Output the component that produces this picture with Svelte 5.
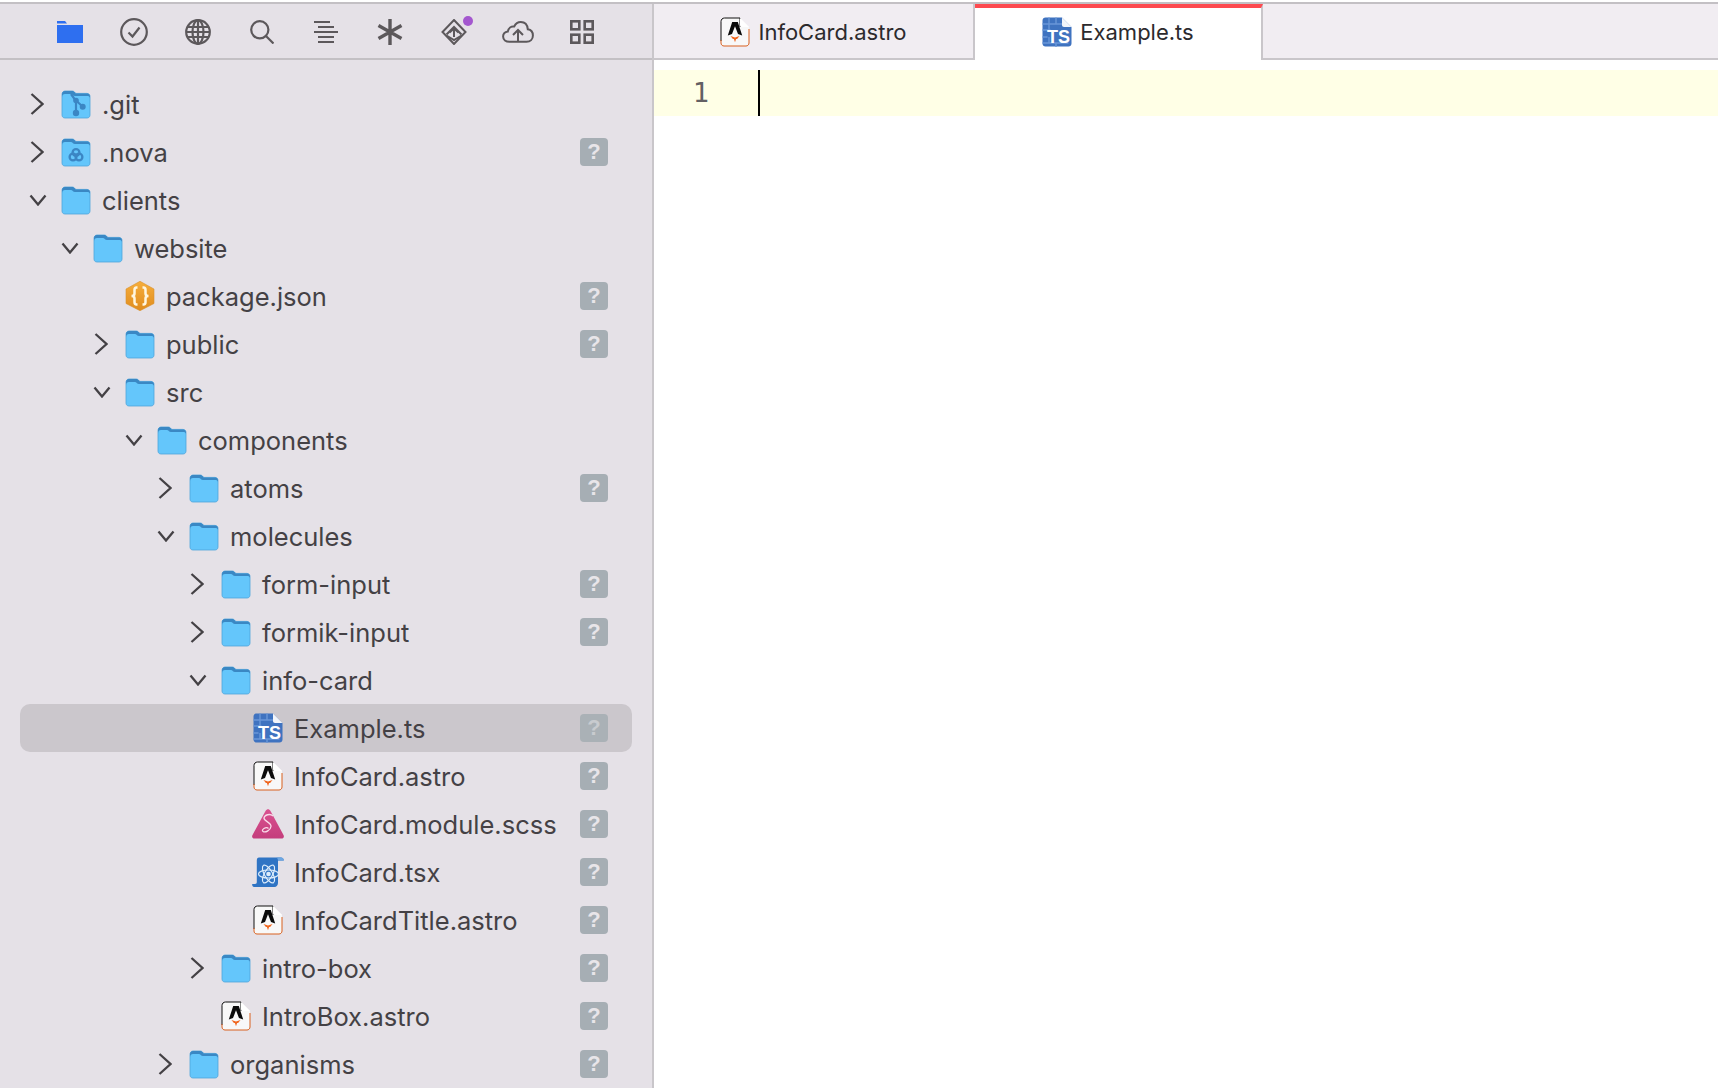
<script>
  const rows = [
    { d: 0, c: '>', i: 'git', t: '.git' },
    { d: 0, c: '>', i: 'nova', t: '.nova', q: 1 },
    { d: 0, c: 'v', i: 'folder', t: 'clients' },
    { d: 1, c: 'v', i: 'folder', t: 'website' },
    { d: 2, i: 'json', t: 'package.json', q: 1 },
    { d: 2, c: '>', i: 'folder', t: 'public', q: 1 },
    { d: 2, c: 'v', i: 'folder', t: 'src' },
    { d: 3, c: 'v', i: 'folder', t: 'components' },
    { d: 4, c: '>', i: 'folder', t: 'atoms', q: 1 },
    { d: 4, c: 'v', i: 'folder', t: 'molecules' },
    { d: 5, c: '>', i: 'folder', t: 'form-input', q: 1 },
    { d: 5, c: '>', i: 'folder', t: 'formik-input', q: 1 },
    { d: 5, c: 'v', i: 'folder', t: 'info-card' },
    { d: 6, i: 'ts', t: 'Example.ts', q: 1, sel: 1 },
    { d: 6, i: 'astro', t: 'InfoCard.astro', q: 1 },
    { d: 6, i: 'scss', t: 'InfoCard.module.scss', q: 1 },
    { d: 6, i: 'tsx', t: 'InfoCard.tsx', q: 1 },
    { d: 6, i: 'astro', t: 'InfoCardTitle.astro', q: 1 },
    { d: 5, c: '>', i: 'folder', t: 'intro-box', q: 1 },
    { d: 5, i: 'astro', t: 'IntroBox.astro', q: 1 },
    { d: 4, c: '>', i: 'folder', t: 'organisms', q: 1 }
  ];
</script>

{#snippet folderBase()}
  <path d="M1 5.500C1 3.500 2.200 2 4 2h7c1.400 0 2.200.6 3 1.600l.6.8H26c1.800 0 3 1.300 3 3V26c0 1.800-1.200 3-3 3H4c-1.800 0-3-1.200-3-3z" fill="#64c6fb" stroke="#4fa5dc" stroke-width=".8"/>
  <path d="M1 5.500C1 3.500 2.200 2 4 2h7c1.400 0 2.200.6 3 1.600l.6.8H26c1.800 0 3 1.300 3 3v1.400c-.4-1.200-1.400-1.800-2.600-1.800H14c-1 0-1.700-.3-2.300-1l-.4-.4c-.3-.3-.7-.5-1.200-.5H4c-1.700 0-3 1.200-3 3z" fill="#3a88c4"/>
{/snippet}

{#snippet icon(kind)}
  {#if kind === 'folder'}
    <svg class="ic" viewBox="0 0 30 30">{@render folderBase()}</svg>
  {:else if kind === 'git'}
    <svg class="ic" viewBox="0 0 30 30">
      {@render folderBase()}
      <path d="M10 5l5 7v12M15 11.500l6.500 6" stroke="#3b86c4" stroke-width="2.200" fill="none"/>
      <circle cx="15" cy="11.500" r="2.800" fill="#3b86c4"/><circle cx="21.700" cy="17.700" r="3" fill="#3b86c4"/><circle cx="15" cy="24" r="3.200" fill="#3b86c4"/>
    </svg>
  {:else if kind === 'nova'}
    <svg class="ic" viewBox="0 0 30 30">
      {@render folderBase()}
      <g fill="none" stroke="#3b86c4" stroke-width="2.300">
        <circle cx="15" cy="15.500" r="3.400"/><circle cx="12" cy="20" r="3.400"/><circle cx="18" cy="20" r="3.400"/>
      </g>
    </svg>
  {:else if kind === 'json'}
    <svg class="ic" viewBox="0 0 30 30">
      <defs><linearGradient id="jg" x1="0" y1="0" x2="0" y2="1"><stop offset="0" stop-color="#f6ae3c"/><stop offset="1" stop-color="#e08c1e"/></linearGradient></defs>
      <path d="M15 .3L29 8v14.500L15 29.700 1 22.500V8z" fill="url(#jg)" stroke="#d8922f" stroke-width=".6" stroke-linejoin="round"/>
      <path d="M12.500 6.500h-1C10 6.500 9.500 7.500 9.500 9v3.500c0 1.500-1 2.500-3 2.500 2 0 3 1 3 2.500V21c0 1.500.5 2.500 2 2.500h1M17.500 6.500h1c1.500 0 2 1 2 2.500v3.500c0 1.500 1 2.500 3 2.500-2 0-3 1-3 2.500V21c0 1.500-.5 2.500-2 2.500h-1" fill="none" stroke="#fff6e0" stroke-width="2.500"/>
    </svg>
  {:else if kind === 'ts'}
    <svg class="ic" viewBox="0 0 30 30">
      <path d="M3 .5h17l9.500 9.500v16.500c0 1.700-1.300 3-3 3h-23c-1.700 0-3-1.300-3-3v-23c0-1.700 1.300-3 3-3z" fill="#3f73c0"/>
      <path d="M.5 7h20M.5 13h8M7 .5V13M14 .5V7M.5 20h5M.5 26h26M14 26v4M7 20v6" stroke="#6a97d8" stroke-width="1.400" fill="none"/>
      <path d="M20 .5l9.500 9.500H22c-1.200 0-2-.8-2-2z" fill="#f2f5fa"/>
      <text x="16.500" y="25.500" class="tsl">TS</text>
    </svg>
  {:else if kind === 'astro'}
    <svg class="ic" viewBox="0 0 30 30">
      <path d="M4.500 1H20l9 9v16c0 1.700-1.300 3-3 3H4c-1.700 0-3-1.300-3-3V4.500C1 2.500 2.500 1 4.500 1z" fill="#f8f8f8"/>
      <path d="M20 10V1H4.500C2.500 1 1 2.500 1 4.500V24" fill="none" stroke="#111" stroke-width="1"/>
      <path d="M1 23v3c0 1.700 1.300 3 3 3h22c1.700 0 3-1.300 3-3V12" fill="none" stroke="#d9601e" stroke-width="1"/>
      <path d="M20 1l9 9h-7c-1.200 0-2-.8-2-2z" fill="#fff"/>
      <path d="M12.200 5h5.600l4.400 13.500-4.200-1.400-3-7.800-3 7.800-4.200 1.400z" fill="#0a0a0a"/>
      <path d="M10.500 19l4.500 1.400 4.500-1.400-2.400 3h-1l-1.100 3.300-1.100-3.300h-1z" fill="#f0661e"/>
    </svg>
  {:else if kind === 'scss'}
    <svg class="ic wide" viewBox="0 0 32 30">
      <defs><linearGradient id="sg" x1="0" y1="0" x2="0" y2="1"><stop offset="0" stop-color="#da5290"/><stop offset="1" stop-color="#c43d7c"/></linearGradient></defs>
      <path d="M13.500 2c1.400-2.300 3.700-2.300 5 0l13 24c1 1.800 0 3.500-2 3.500H2.500c-2 0-3-1.700-2-3.500z" fill="url(#sg)"/>
      <path d="M21 7c-3-3-8.500-1-9 2-.5 3 7.500 4.500 7 8.500-.4 3.500-5.500 6.500-8 5-2.300-1.400 3-5.500 5.500-3" fill="none" stroke="#f9dbe9" stroke-width="1.300"/>
    </svg>
  {:else if kind === 'tsx'}
    <svg class="ic wide" viewBox="0 0 32 30">
      <path d="M7 .5h22c1.500 0 2.800 1 2.800 3H26v22.500c0 2.200-1.500 4-3.500 4H2C.8 30 0 29 .2 27H3c1.300 0 1.800-.7 1.800-2V3.500C4.800 1.500 5.500.5 7 .5z" fill="#2f74c4"/>
      <path d="M24 .5h5c1.500 0 2.800 1 2.800 3H26c0-1.500-.8-3-2-3z" fill="#6da6e2"/>
      <g fill="none" stroke="#dcecfb" stroke-width="1.200">
        <ellipse cx="16.500" cy="17" rx="10" ry="4"/>
        <ellipse cx="16.500" cy="17" rx="10" ry="4" transform="rotate(60 16.500 17)"/>
        <ellipse cx="16.500" cy="17" rx="10" ry="4" transform="rotate(120 16.500 17)"/>
      </g>
      <circle cx="16.500" cy="17" r="2.300" fill="#dcecfb"/>
    </svg>
  {/if}
{/snippet}

<div class="window">
  <div class="top"></div>
  <div class="main">
    <aside class="side">
      <div class="toolbar">
        <div class="tool"><svg width="26" height="22" viewBox="0 0 26 22"><path d="M0 0h8l2 2.500H0z" fill="#2e6ff0"/><path d="M0 4h26v18H0z" fill="#2e6ff0"/></svg></div>
        <div class="tool"><svg width="28" height="28" viewBox="0 0 28 28" class="st"><circle cx="14" cy="14" r="12.800"/><path d="M8.500 14.500l4 4 7-9"/></svg></div>
        <div class="tool"><svg width="26" height="26" viewBox="0 0 26 26" class="st"><circle cx="13" cy="13" r="11.800"/><ellipse cx="13" cy="13" rx="5.500" ry="11.800"/><path d="M13 1.200v23.600M2.500 8h21M1.200 13h23.600M2.500 18h21"/></svg></div>
        <div class="tool"><svg width="24" height="24" viewBox="0 0 24 24" class="st"><circle cx="9.800" cy="9.800" r="8.600"/><path d="M16 16l7.500 7.500"/></svg></div>
        <div class="tool"><svg width="24" height="24" viewBox="0 0 24 24" class="st"><path d="M0 2h16M4 7h16M0 12h24M4 17h16M4 22h16"/></svg></div>
        <div class="tool"><svg width="26" height="26" viewBox="0 0 26 26" class="st thick"><path d="M13 0v26M1.500 6.500l23 13M1.500 19.500l23-13"/></svg></div>
        <div class="tool note">
          <svg width="26" height="26" viewBox="0 0 26 26" class="st thin"><path d="M13 1l11.500 12L13 25 1.500 13z"/><path d="M5.500 15.500L13 8l7.500 7.500M13 8v10M8.500 13.500L13 9.500l4.500 4M5.500 16.500L13 21l7.500-4.500"/></svg>
          <span class="dot"></span>
        </div>
        <div class="tool"><svg width="32" height="22" viewBox="0 0 32 22" class="st thin"><path d="M7.500 20.800c-3.600 0-6.400-2.100-6.400-5.200 0-2.800 2-4.600 4.700-5C6.500 7 9.300 5 12.200 5.500 13.500 2.800 16 1.100 18.800 1.100c4 0 6.600 3 7 7.200 2.800.5 5.100 2.800 5.100 6.100 0 3.600-2.600 6.400-6.400 6.400z"/><path d="M16 20.800V9M11 14l5-5 5 5"/></svg></div>
        <div class="tool"><svg width="24" height="24" viewBox="0 0 24 24" class="st sq"><rect x="1.300" y="1.300" width="8" height="8"/><rect x="14.700" y="1.300" width="8" height="8"/><rect x="1.300" y="14.700" width="8" height="8"/><rect x="14.700" y="14.700" width="8" height="8"/></svg></div>
      </div>
      <div class="tree">
        {#each rows as r}
          <div class="row" class:sel={r.sel} style="padding-left: {r.d * 32}px">
            <span class="chev">
              {#if r.c === '>'}
                <svg class="right" width="14" height="22" viewBox="0 0 14 22"><path d="M1.500 1L12.500 11 1.500 21"/></svg>
              {:else if r.c === 'v'}
                <svg class="down" width="18" height="12" viewBox="0 0 18 12"><path d="M1.500 1.500L9 10.500l7.500-9"/></svg>
              {/if}
            </span>
            {@render icon(r.i)}
            <span class="name">{r.t}</span>
            {#if r.q}<span class="q">?</span>{/if}
          </div>
        {/each}
      </div>
    </aside>
    <section class="editor">
      <div class="tabs">
        <div class="tab first">{@render icon('astro')}<span>InfoCard.astro</span></div>
        <div class="tab active">{@render icon('ts')}<span>Example.ts</span></div>
      </div>
      <div class="code">
        <div class="line"><span class="num">1</span><span class="caret"></span></div>
      </div>
    </section>
  </div>
</div>

<style>
  :global(body) { margin: 0; background: #fff; overflow: hidden; }
  .window { width: 1718px; height: 1088px; display: flex; flex-direction: column; font-family: Inter, "Liberation Sans", sans-serif; overflow: hidden; }
  .top { height: 2px; background: #fff; border-bottom: 2px solid #c3c0c4; flex: none; }
  .main { flex: 1; display: flex; min-height: 0; }
  .side { width: 652px; flex: none; background: #e5e1e7; border-right: 2px solid #c9c6ca; display: flex; flex-direction: column; }
  .toolbar { height: 54px; box-sizing: content-box; padding-left: 38px; border-bottom: 2px solid #c3c0c4; display: flex; align-items: center; flex: none; }
  .tool { width: 64px; display: flex; justify-content: center; align-items: center; position: relative; top: 1px; }
  .st { fill: none; stroke: #5c585b; stroke-width: 2.200; }
  .st.thick { stroke-width: 3.400; }
  .st.thin { stroke-width: 2; }
  .st.sq { stroke-width: 2.600; }
  .note .dot { position: absolute; width: 10px; height: 10px; border-radius: 50%; background: #a457cf; top: -3px; right: 13px; }
  .tree { padding-top: 20px; }
  .row { height: 48px; display: flex; align-items: center; position: relative; box-sizing: border-box; margin: 0 20px; }
  .row.sel { background: #cbc7cc; border-radius: 10px; }
  .chev { width: 41px; flex: none; display: flex; justify-content: center; align-items: center; }
  .chev svg { fill: none; stroke: #444145; stroke-width: 2.300; }
  .chev .right { transform: translateX(-4px); }
  .chev .down { transform: translateX(-3px); }
  .ic { width: 30px; height: 30px; flex: none; }
  .ic.wide { width: 32px; margin: 0 -1px; }
  .name { margin-left: 11px; font-size: 25.500px; color: #444145; white-space: nowrap; }
  .q { position: absolute; right: 24px; top: 10px; width: 28px; height: 28px; background: #a6aeb4; border-radius: 4px; color: #e8e5e9; font: bold 22px/28px "Liberation Sans", sans-serif; text-align: center; }
  .sel .q { background: #aab1b6; color: #c8cbcf; }
  .tsl { font: bold 18px "Liberation Sans", sans-serif; fill: #fff; text-anchor: middle; }
  .editor { flex: 1; display: flex; flex-direction: column; background: #fff; }
  .tabs { height: 56px; box-sizing: border-box; background: #f1edf2; border-bottom: 2px solid #c9c6ca; display: flex; flex: none; }
  .tab { display: flex; align-items: center; justify-content: center; gap: 8px; font-size: 22px; color: #2c2a2d; box-sizing: border-box; }
  .tab.first { width: 321px; height: 54px; padding-top: 2px; border-right: 2px solid #c9c6ca; }
  .tab.active { width: 288px; height: 56px; padding-bottom: 4px; background: #fff; border-top: 4px solid #fd4a50; border-right: 2px solid #c9c6ca; }
  .code { padding-top: 10px; }
  .line { height: 46px; background: #ffffe6; display: flex; align-items: center; position: relative; }
  .num { width: 103px; box-sizing: border-box; padding-right: 48px; text-align: right; font: 27px "DejaVu Sans Mono", monospace; color: #636063; position: relative; top: -1px; }
  .caret { width: 2px; height: 46px; background: #000; margin-left: 1px; }
</style>
